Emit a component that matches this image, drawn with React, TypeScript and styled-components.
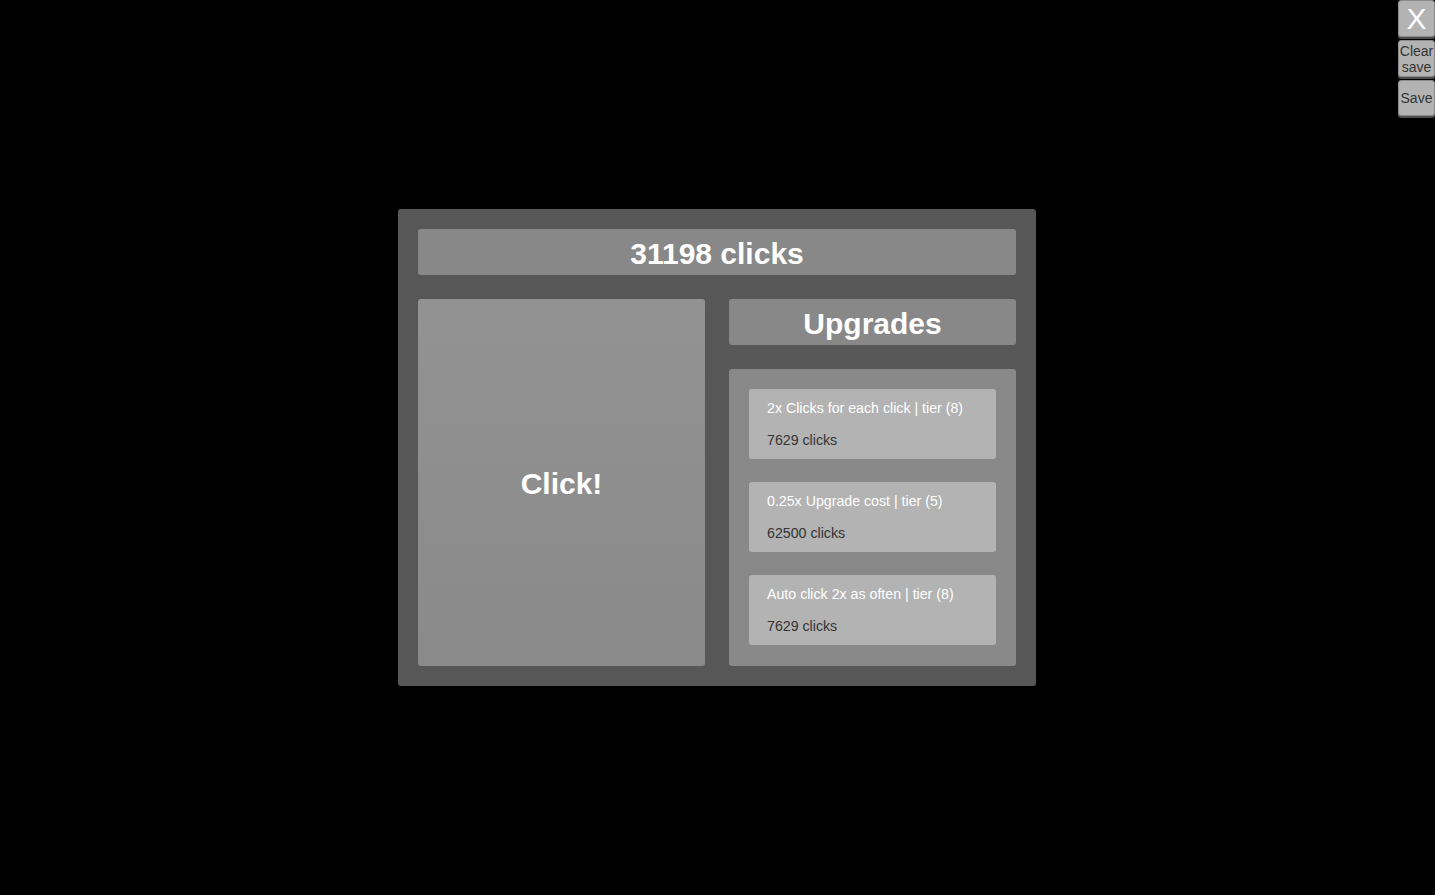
import React from 'react';
import styled, { createGlobalStyle } from 'styled-components';

const GlobalStyle = createGlobalStyle`
  html, body {
    margin: 0;
    padding: 0;
    height: 100%;
    background: #000;
    font-family: "Liberation Sans", Arial, sans-serif;
  }
  #root {
    height: 100%;
  }
`;

const Screen = styled.div`
  position: relative;
  height: 100vh;
  box-sizing: border-box;
  padding-right: 1px;
  display: flex;
  align-items: center;
  justify-content: center;
`;

const SideMenu = styled.div`
  position: absolute;
  top: 0;
  right: 0;
  width: 37px;
  display: flex;
  flex-direction: column;
  gap: 3px;
`;

const MenuButton = styled.button<{ $big?: boolean; $h: number }>`
  height: ${(p) => p.$h}px;
  box-sizing: border-box;
  margin: 0;
  padding: 0;
  border: 1px solid #8a8a8a;
  border-radius: 3px;
  background: #b3b3b3;
  box-shadow: 0 2px 0 #4e4e4e;
  color: ${(p) => (p.$big ? '#fff' : '#333')};
  font-family: "Liberation Sans", Arial, sans-serif;
  font-size: ${(p) => (p.$big ? '30px' : '14px')};
  line-height: ${(p) => (p.$big ? '34px' : '16px')};
  cursor: pointer;
`;

const Panel = styled.div`
  width: 638px;
  height: 477px;
  box-sizing: border-box;
  padding: 20px;
  background: #575757;
  border-radius: 3px;
  display: flex;
  flex-direction: column;
  gap: 24px;
`;

const Bar = styled.div`
  height: 46px;
  box-sizing: border-box;
  padding-top: 4px;
  background: #888;
  border-radius: 3px;
  display: flex;
  align-items: center;
  justify-content: center;
  color: #fff;
  font-size: 30px;
  font-weight: bold;
`;

const Columns = styled.div`
  flex: 1;
  display: grid;
  grid-template-columns: 287px 287px;
  gap: 24px;
`;

const ClickButton = styled.button`
  border: none;
  border-radius: 3px;
  background: linear-gradient(#929292, #8a8a8a);
  color: #fff;
  font-family: "Liberation Sans", Arial, sans-serif;
  font-size: 30px;
  font-weight: bold;
  padding: 2px 0 0;
  cursor: pointer;
`;

const RightColumn = styled.div`
  display: flex;
  flex-direction: column;
  gap: 24px;
`;

const UpgradeList = styled.div`
  flex: 1;
  box-sizing: border-box;
  padding: 20px;
  background: #898989;
  border-radius: 3px;
  display: flex;
  flex-direction: column;
  gap: 23px;
`;

const UpgradeItem = styled.div`
  height: 70px;
  box-sizing: border-box;
  padding: 11px 18px 11px;
  background: #b3b3b3;
  border-radius: 3px;
  display: flex;
  flex-direction: column;
  gap: 16px;
  font-size: 14.2px;
  line-height: 16px;
`;

const UpgradeName = styled.div`
  color: #fff;
`;

const UpgradeCost = styled.div`
  color: #333;
`;

const upgrades = [
  { name: '2x Clicks for each click | tier (8)', cost: 7629 },
  { name: '0.25x Upgrade cost | tier (5)', cost: 62500 },
  { name: 'Auto click 2x as often | tier (8)', cost: 7629 },
];

export default function App() {
  return (
    <>
      <GlobalStyle />
      <Screen>
        <SideMenu>
          <MenuButton $big $h={37}>X</MenuButton>
          <MenuButton $h={37}>Clear<br />save</MenuButton>
          <MenuButton $h={36}>Save</MenuButton>
        </SideMenu>
        <Panel>
          <Bar>31198 clicks</Bar>
          <Columns>
            <ClickButton>Click!</ClickButton>
            <RightColumn>
              <Bar>Upgrades</Bar>
              <UpgradeList>
                {upgrades.map((u) => (
                  <UpgradeItem key={u.name}>
                    <UpgradeName>{u.name}</UpgradeName>
                    <UpgradeCost>{u.cost} clicks</UpgradeCost>
                  </UpgradeItem>
                ))}
              </UpgradeList>
            </RightColumn>
          </Columns>
        </Panel>
      </Screen>
    </>
  );
}
